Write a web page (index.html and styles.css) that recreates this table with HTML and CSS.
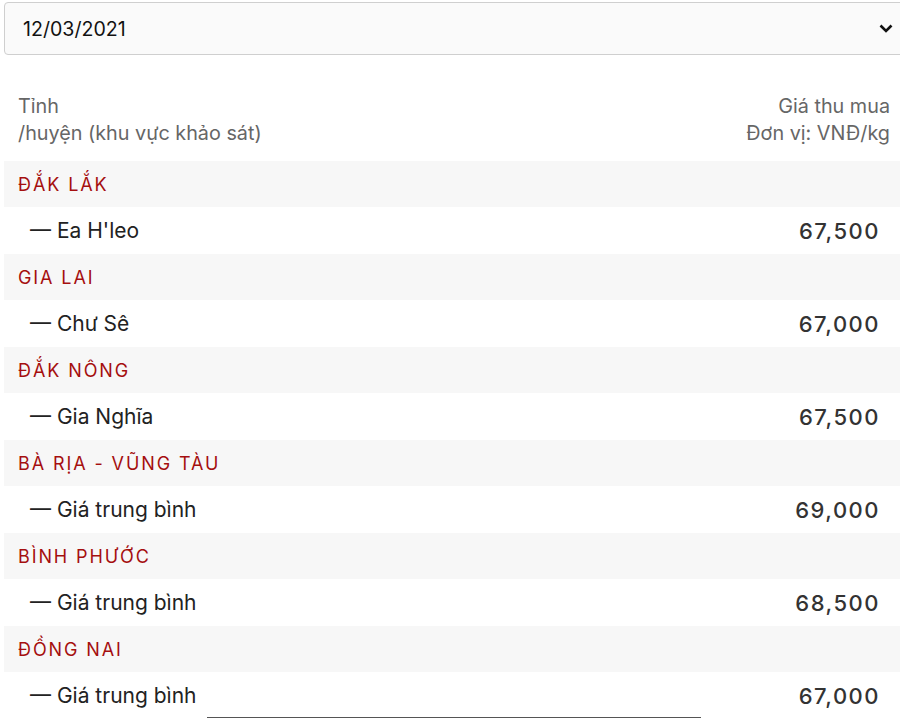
FILE: index.html
```html
<!DOCTYPE html>
<html lang="vi">
<head>
<meta charset="utf-8">
<link rel="stylesheet" href="styles.css">
</head>
<body>
<div class="page">
  <div class="select">
    <span class="select-value">12/03/2021</span>
    <svg class="chevron" width="14" height="9" viewBox="0 0 14 9"><path d="M1.5 1.5 L7 7 L12.5 1.5" fill="none" stroke="#111" stroke-width="2.6"/></svg>
  </div>

  <div class="table">
    <div class="head">
      <div class="head-left">Tỉnh<br>/huyện (khu vực khảo sát)</div>
      <div class="head-right">Giá thu mua<br>Đơn vị: VNĐ/kg</div>
    </div>

    <div class="group">ĐẮK LẮK</div>
    <div class="item"><span class="name">— Ea H'leo</span><span class="price">67,500</span></div>

    <div class="group">GIA LAI</div>
    <div class="item"><span class="name">— Chư Sê</span><span class="price">67,000</span></div>

    <div class="group">ĐẮK NÔNG</div>
    <div class="item"><span class="name">— Gia Nghĩa</span><span class="price">67,500</span></div>

    <div class="group">BÀ RỊA - VŨNG TÀU</div>
    <div class="item"><span class="name">— Giá trung bình</span><span class="price">69,000</span></div>

    <div class="group">BÌNH PHƯỚC</div>
    <div class="item"><span class="name">— Giá trung bình</span><span class="price">68,500</span></div>

    <div class="group">ĐỒNG NAI</div>
    <div class="item"><span class="name">— Giá trung bình</span><span class="price">67,000</span></div>
  </div>
  <div class="rule"></div>
</div>
</body>
</html>
```

FILE: styles.css
```css
html, body {
  margin: 0;
  padding: 0;
  background: #fff;
  overflow: hidden;
}
body {
  font-family: Inter, "Liberation Sans", Arial, sans-serif;
  color: #222;
}
.page {
  padding: 2px 0 0 4px;
  width: 904px;
}
.select {
  box-sizing: border-box;
  height: 53px;
  border: 1px solid #cfcfcf;
  border-radius: 4px;
  background: #fafafa;
  display: flex;
  align-items: center;
  justify-content: space-between;
  padding: 1px 14px 0 18px;
  font-size: 19.6px;
  color: #111;
}
.chevron {
  display: block;
  margin-top: -2px;
}
.table {
  margin-top: 24px;
  width: 896px;
}
.head {
  display: flex;
  justify-content: space-between;
  padding: 14px 10px 14px 14px;
  font-size: 19.8px;
  line-height: 27px;
  color: #666;
}
.head-right {
  text-align: right;
}
.group {
  height: 46px;
  display: flex;
  align-items: center;
  padding-left: 14px;
  background: #f7f7f7;
  color: #a50f0f;
  font-size: 18px;
  letter-spacing: 1.9px;
}
.item {
  height: 47px;
  display: flex;
  align-items: center;
  justify-content: space-between;
  padding: 0 20px 0 26px;
  font-size: 21px;
  color: #222;
}
.price {
  font-size: 22px;
  font-weight: 500;
  letter-spacing: 1.5px;
  color: #333;
}
.rule {
  margin: -2px 0 0 203px;
  width: 494px;
  height: 1px;
  background: #555;
}
```
